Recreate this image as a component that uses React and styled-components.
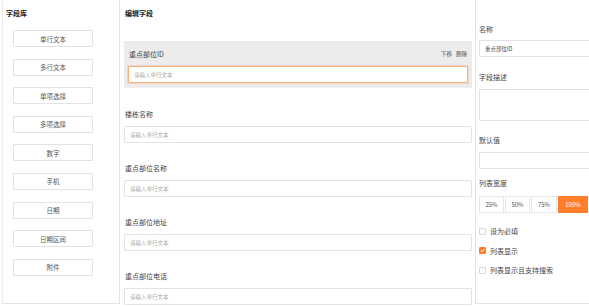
import React from "react";
import styled, { createGlobalStyle } from "styled-components";

const Global = createGlobalStyle`
  html, body { margin: 0; padding: 0; background: #fff; }
  body { font-family: "Noto Sans CJK SC", "Noto Sans", sans-serif; color: #333; }
  * { box-sizing: border-box; }
`;

const Page = styled.div`
  display: flex;
  width: 589px;
  height: 306px;
  overflow: hidden;
  background: #fff;
`;

const LeftPanel = styled.aside`
  flex: 0 0 118px;
  margin-left: 2px;
  height: 304px;
  border-left: 1px solid #ececec;
  border-right: 1px solid #e4e4e4;
  border-bottom: 1px solid #e4e4e4;
  padding: 6px 0 0 10px;
`;

const MiddlePanel = styled.main`
  flex: 0 0 355px;
  padding: 6px 3px 0 4px;
`;

const RightPanel = styled.aside`
  flex: 0 0 160px;
  height: 304px;
  border-left: 1px solid #e4e4e4;
  border-bottom: 1px solid #e4e4e4;
  padding: 23px 0 0 3px;
`;

const Title = styled.div`
  font-size: 7px;
  font-weight: 700;
  line-height: 14px;
  color: #222;
  margin-left: ${(p) => p.$indent || 0}px;
`;

const ButtonList = styled.div`
  display: flex;
  flex-direction: column;
  gap: 11.6px;
  margin-top: 10px;
`;

const FieldButton = styled.div`
  width: 80px;
  height: 17px;
  border: 1px solid #e2e2e2;
  border-radius: 1px;
  display: flex;
  align-items: center;
  justify-content: center;
  font-size: 6.5px;
  color: #555;
  background: #fff;
`;

const FieldList = styled.div`
  display: flex;
  flex-direction: column;
  gap: 7px;
  margin-top: 21px;
`;

const Field = styled.div`
  padding: 7px ${(p) => (p.$active ? 4 : 0)}px 5px;
  background: ${(p) => (p.$active ? "#edebeb" : "transparent")};
  margin-bottom: ${(p) => (p.$active ? 6 : 0)}px;
`;

const FieldHead = styled.div`
  display: flex;
  justify-content: space-between;
  align-items: center;
  height: 12px;
  margin-bottom: 6px;
  padding-left: 1px;
`;

const Label = styled.span`
  font-size: 7px;
  color: #444;
`;

const Actions = styled.div`
  display: flex;
  gap: 4px;
  font-size: 5.5px;
  color: #555;
  margin-right: 1px;
`;

const Input = styled.div`
  height: 17px;
  border: 1px solid ${(p) => (p.$focus ? "#f5b27e" : "#e3e3e3")};
  border-radius: 1px;
  background: #fff;
  display: flex;
  align-items: center;
  padding-left: 5px;
  font-size: 5.5px;
  color: ${(p) => (p.$value ? "#444" : "#aaa")};
  box-shadow: ${(p) => (p.$focus ? "0 0 0 1px rgba(245,178,126,0.35)" : "none")};
`;

const TextArea = styled.div`
  height: 32px;
  border: 1px solid #e3e3e3;
  border-radius: 1px;
  background: #fff;
`;

const FormItem = styled.div`
  margin-bottom: ${(p) => p.$mb || 0}px;
`;

const RLabel = styled.div`
  font-size: 7px;
  line-height: 12px;
  color: #444;
  margin-bottom: ${(p) => p.$mb || 6}px;
`;

const Segmented = styled.div`
  display: flex;
  gap: 1px;
`;

const Seg = styled.div`
  height: 17px;
  width: ${(p) => p.$w}px;
  border: 1px solid ${(p) => (p.$on ? "#ff7e2a" : "#e6e6e6")};
  background: ${(p) => (p.$on ? "#ff7e2a" : "#fff")};
  color: ${(p) => (p.$on ? "#fff" : "#555")};
  font-size: 6px;
  display: flex;
  align-items: center;
  justify-content: center;
`;

const CheckList = styled.div`
  display: flex;
  flex-direction: column;
  gap: 7.5px;
  margin-top: 12px;
`;

const CheckRow = styled.div`
  display: flex;
  align-items: center;
  height: 12px;
  gap: 4px;
  font-size: 7px;
  color: #444;
`;

const Box = styled.span`
  width: 7px;
  height: 7px;
  border: 1px solid ${(p) => (p.$on ? "#ff7e2a" : "#d8d8d8")};
  background: ${(p) => (p.$on ? "#ff7e2a" : "#fff")};
  border-radius: 1px;
  display: flex;
  align-items: center;
  justify-content: center;
`;

const types = ["单行文本", "多行文本", "单项选择", "多项选择", "数字", "手机", "日期", "日期区间", "附件"];
const fields = ["楼栋名称", "重点部位名称", "重点部位地址", "重点部位电话"];

export default function App() {
  return (
    <>
      <Global />
      <Page>
        <LeftPanel>
          <Title $indent={-7}>字段库</Title>
          <ButtonList>
            {types.map((t) => (
              <FieldButton key={t}>{t}</FieldButton>
            ))}
          </ButtonList>
        </LeftPanel>
        <MiddlePanel>
          <Title $indent={1}>编辑字段</Title>
          <FieldList>
            <Field $active>
              <FieldHead>
                <Label>重点部位ID</Label>
                <Actions>
                  <span>下移</span>
                  <span>删除</span>
                </Actions>
              </FieldHead>
              <Input $focus>请输入单行文本</Input>
            </Field>
            {fields.map((f) => (
              <Field key={f}>
                <FieldHead>
                  <Label>{f}</Label>
                </FieldHead>
                <Input>请输入单行文本</Input>
              </Field>
            ))}
          </FieldList>
        </MiddlePanel>
        <RightPanel>
          <FormItem $mb={14}>
            <RLabel $mb={5}>名称</RLabel>
            <Input $value>重点部位ID</Input>
          </FormItem>
          <FormItem $mb={13}>
            <RLabel>字段描述</RLabel>
            <TextArea />
          </FormItem>
          <FormItem $mb={8}>
            <RLabel>默认值</RLabel>
            <Input $value />
          </FormItem>
          <FormItem>
            <RLabel $mb={7}>列表宽度</RLabel>
            <Segmented>
              <Seg $w={25}>25%</Seg>
              <Seg $w={25}>50%</Seg>
              <Seg $w={26}>75%</Seg>
              <Seg $w={30} $on>100%</Seg>
            </Segmented>
          </FormItem>
          <CheckList>
            <CheckRow>
              <Box />
              设为必填
            </CheckRow>
            <CheckRow>
              <Box $on>
                <svg width="5" height="5" viewBox="0 0 10 10">
                  <path d="M1.5 5.2 L4 7.6 L8.6 2.4" fill="none" stroke="#fff" strokeWidth="1.8" />
                </svg>
              </Box>
              列表显示
            </CheckRow>
            <CheckRow>
              <Box />
              列表显示且支持搜索
            </CheckRow>
          </CheckList>
        </RightPanel>
      </Page>
    </>
  );
}
